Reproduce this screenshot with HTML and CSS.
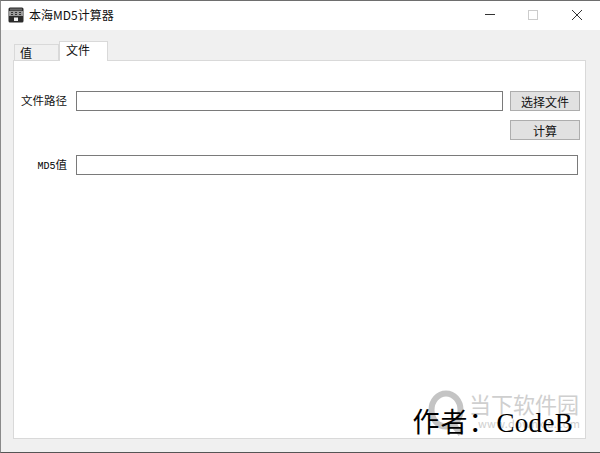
FILE: index.html
```html
<!DOCTYPE html>
<html lang="zh-CN">
<head>
  <meta charset="UTF-8" />
  <title>本海MD5计算器</title>
  <link rel="stylesheet" href="styles.css">
</head>
<body>
  <div class="window">
    <header class="titlebar">
      <svg class="app-icon" width="16" height="16" viewBox="0 0 16 16">
        <rect x="0.5" y="0.5" width="15" height="15" rx="1.5" fill="#2b2b2b" />
        <rect x="2" y="1.5" width="12" height="2" fill="#666" />
        <rect x="1" y="4" width="14" height="5" fill="#9a9a9a" />
        <path d="M3 5.5h2M7 5.5h2M11 5.5h2M3 7.5h2M7 7.5h2M11 7.5h2" stroke="#333" />
        <rect x="6" y="10.5" width="4" height="3.5" fill="#eee" />
      </svg>
      <span class="title">本海MD5计算器</span>
      <div class="controls">
        <svg width="43" height="29" viewBox="0 0 43 29"><path d="M18 13.5h10" stroke="#333" fill="none" /></svg>
        <svg width="44" height="29" viewBox="0 0 44 29"><rect x="18.5" y="9.5" width="9" height="9" stroke="#ccc" fill="none" /></svg>
        <svg width="46" height="29" viewBox="0 0 46 29"><path d="M18 9l10 10M28 9l-10 10" stroke="#333" fill="none" /></svg>
      </div>
    </header>

    <main class="content">
      <div class="tabs">
        <div class="tab">值</div>
        <div class="tab active">文件</div>
      </div>
      <section class="pane">
        <div class="form">
          <label class="field-label">文件路径</label>
          <input class="field" type="text" />
          <button class="btn">选择文件</button>
          <button class="btn btn-calc">计算</button>
          <label class="field-label md5-label"><span class="mono">MD5</span>值</label>
          <input class="field field-wide" type="text" />
        </div>
        <div class="author"><span class="author-cjk">作者：</span>CodeB</div>
      </section>
    </main>

    <div class="watermark">
      <svg class="wm-logo" width="37" height="46" viewBox="0 0 37 46">
        <ellipse cx="18" cy="20" rx="14.5" ry="16.5" fill="none" stroke="#c4c4c4" stroke-width="6" />
        <path d="M24 33l9 11" stroke="#c4c4c4" stroke-width="6" fill="none" />
      </svg>
      <div class="wm-text">
        <div class="wm-name">当下软件园</div>
        <div class="wm-url">www.downxia.com</div>
      </div>
    </div>
  </div>
</body>
</html>
```

FILE: styles.css
```css
*, *::before, *::after {
  box-sizing: border-box;
  margin: 0;
  padding: 0;
}
html, body {
  width: 600px;
  height: 453px;
  overflow: hidden;
  background: #f0f0f0;
  font-family: "Noto Sans CJK SC", "Noto Sans", sans-serif;
  color: #111;
}
.window {
  position: relative;
  width: 600px;
  height: 453px;
  display: flex;
  flex-direction: column;
  border-top: 1px solid #6e6e6e;
  border-left: 1px solid #8a8a8a;
  border-bottom: 1px solid #555;
}
.titlebar {
  height: 29px;
  flex: none;
  background: #fff;
  display: flex;
  align-items: center;
  padding: 0 0 2px 7px;
}
.app-icon {
  flex: none;
}
.title {
  margin-left: 5px;
  font-size: 12px;
}
.controls {
  margin-left: auto;
  align-self: flex-start;
  display: flex;
}
.controls svg {
  display: block;
}
.content {
  flex: 1;
  display: flex;
  flex-direction: column;
  padding: 11px 14px 13px 12px;
}
.tabs {
  display: flex;
  height: 19px;
  padding-left: 1px;
}
.tab {
  width: 45px;
  height: 16px;
  margin-top: 3px;
  background: #f0f0f0;
  border: 1px solid #d9d9d9;
  border-bottom: none;
  font-size: 12px;
  line-height: 16px;
  padding-left: 5px;
}
.tab.active {
  width: 49px;
  height: 20px;
  margin-top: 0;
  background: #fff;
  padding-left: 6px;
  position: relative;
  z-index: 1;
}
.pane {
  flex: 1;
  position: relative;
  background: #fff;
  border: 1px solid #d9d9d9;
  padding-top: 30px;
}
.form {
  display: grid;
  grid-template-columns: 55px 427px 70px;
  column-gap: 7px;
  row-gap: 9px;
  align-items: center;
}
.field-label {
  font-size: 11.5px;
  text-align: right;
  padding-right: 2px;
  margin-top: -3px;
}
.md5-label {
  grid-column: 1;
  margin-top: 3px;
}
.mono {
  font-family: "Liberation Mono", monospace;
  font-size: 10px;
  color: #000;
}
.field {
  height: 20px;
  background: #fff;
  border: 1px solid #7a7a7a;
  outline: none;
}
.field-wide {
  grid-column: 2 / 4;
  width: 502px;
  margin-top: 6px;
}
.btn {
  height: 20px;
  background: #e1e1e1;
  border: 1px solid #adadad;
  font-family: inherit;
  font-size: 12px;
  color: #111;
}
.btn-calc {
  grid-column: 3;
}
.author {
  position: absolute;
  right: 12px;
  bottom: -1px;
  font-family: "Liberation Serif", "Noto Sans CJK SC", serif;
  font-size: 27px;
  line-height: 32px;
  letter-spacing: 0.3px;
  color: #000;
  z-index: 1;
  white-space: nowrap;
}
.author-cjk {
  letter-spacing: 1px;
}
.watermark {
  position: absolute;
  left: 427px;
  top: 389px;
  display: flex;
  gap: 4px;
}
.wm-logo {
  flex: none;
}
.wm-text {
  white-space: nowrap;
}
.wm-name {
  font-size: 22px;
  line-height: 26px;
  color: #cfcfcf;
}
.wm-url {
  font-size: 11px;
  line-height: 14px;
  padding-left: 9px;
  letter-spacing: 0.3px;
  color: #cfcfcf;
}
```
